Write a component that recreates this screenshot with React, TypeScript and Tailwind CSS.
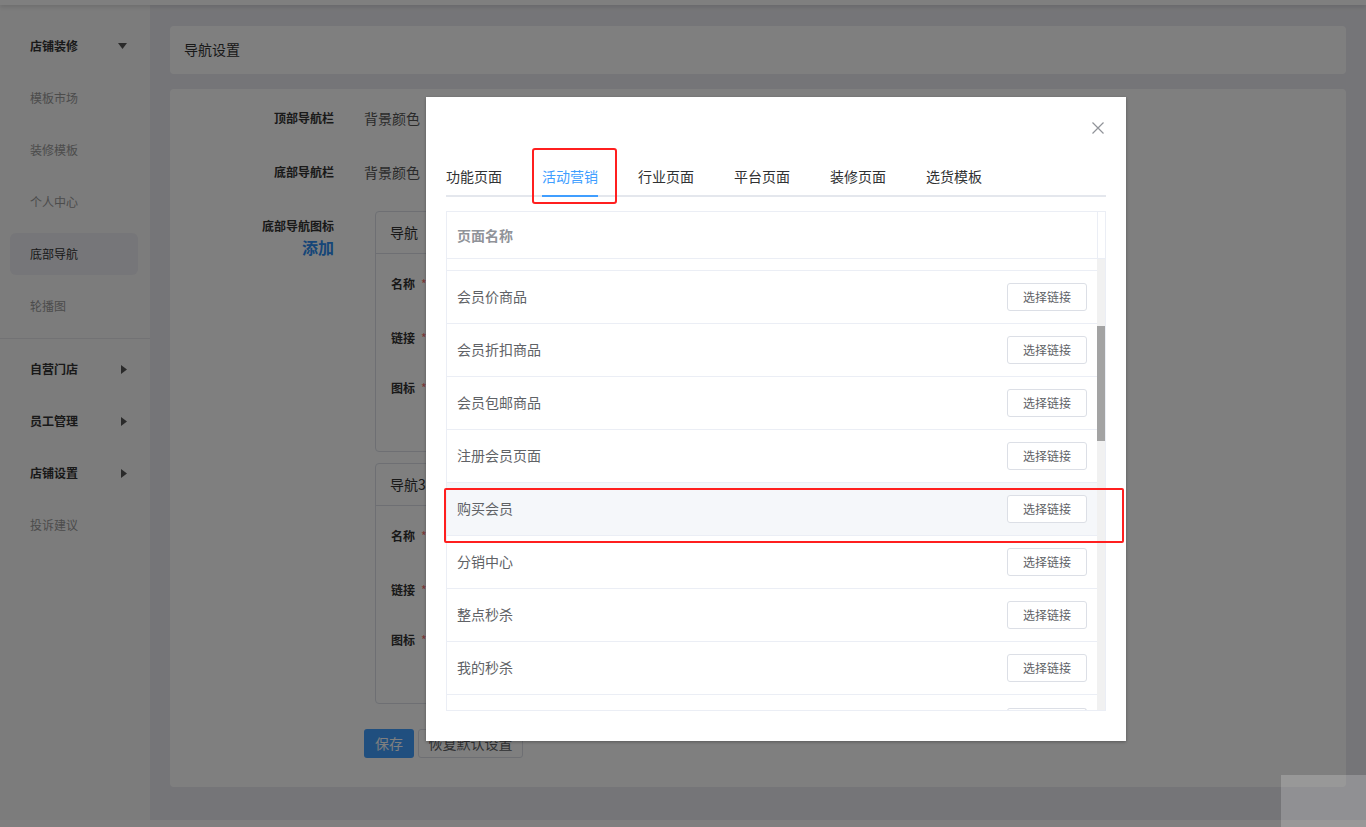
import React from "react";

const menu = [
  { label: "店铺装修", group: true, caret: "down" },
  { label: "模板市场" },
  { label: "装修模板" },
  { label: "个人中心" },
  { label: "底部导航", active: true },
  { label: "轮播图" },
];

const menu2 = [
  { label: "自营门店", group: true },
  { label: "员工管理", group: true },
  { label: "店铺设置", group: true },
  { label: "投诉建议" },
];

const tabs = ["功能页面", "活动营销", "行业页面", "平台页面", "装修页面", "选货模板"];

// rows scrolled into view; first and last are only partly visible
const rows = [
  "会员价商品",
  "会员折扣商品",
  "会员包邮商品",
  "注册会员页面",
  "购买会员",
  "分销中心",
  "整点秒杀",
  "我的秒杀",
];

function Caret({ dir }: { dir: "down" | "right" }) {
  return dir === "down" ? (
    <svg width="9" height="6" viewBox="0 0 9 6">
      <polygon points="0,0 9,0 4.5,6" fill="#555" />
    </svg>
  ) : (
    <svg width="6" height="9" viewBox="0 0 6 9">
      <polygon points="0,0 6,4.5 0,9" fill="#555" />
    </svg>
  );
}

function MenuItem({ item }: { item: { label: string; group?: boolean; active?: boolean; caret?: string } }) {
  return (
    <div className="h-[52px] pl-[10px] pr-[12px] flex items-center">
      <div
        className={
          "h-[42px] w-full rounded-[6px] pl-[20px] pr-[11px] flex items-center justify-between text-[12px] " +
          (item.active ? "bg-[#ececf2] text-[#333]" : item.group ? "text-[#333] font-bold" : "text-[#999]")
        }
      >
        <span>{item.label}</span>
        {item.group && (
          <span className="flex items-center">
            <Caret dir={item.caret === "down" ? "down" : "right"} />
          </span>
        )}
      </div>
    </div>
  );
}

function NavCard({ title }: { title: string }) {
  return (
    <div className="ml-[11px] w-[520px] h-[241px] border border-[#dcdfe6] rounded-[4px] bg-white">
      <div className="h-[42px] border-b border-[#dcdfe6] px-[14px] flex items-center text-[14px] text-[#333]">{title}</div>
      <div className="px-[15px] pt-[14px]">
        <div className="h-[32px] flex items-center text-[12px] font-bold text-[#333]">
          名称<span className="ml-[6px] text-[#f56c6c] font-normal">*</span>
        </div>
        <div className="mt-[22px] h-[32px] flex items-center text-[12px] font-bold text-[#333]">
          链接<span className="ml-[6px] text-[#f56c6c] font-normal">*</span>
        </div>
        <div className="mt-[18px] h-[32px] flex items-center text-[12px] font-bold text-[#333]">
          图标<span className="ml-[6px] text-[#f56c6c] font-normal">*</span>
        </div>
      </div>
    </div>
  );
}

export default function App() {
  return (
    <div className="relative w-[1366px] h-[827px] overflow-hidden bg-white font-['Noto_Sans_CJK_SC','Microsoft_YaHei',sans-serif]">
      {/* page */}
      <div className="h-[5px] bg-white shadow-[0_2px_4px_rgba(0,0,0,0.12)] relative z-[1]" />
      <div className="flex h-[815px]">
        <aside className="w-[150px] shrink-0 bg-[#f8f8f8] pt-[15px]">
          {menu.map((m) => (
            <MenuItem key={m.label} item={m} />
          ))}
          <div className="mt-[6px] h-px bg-[#e4e4e8]" />
          <div className="pt-[4px]">
            {menu2.map((m) => (
              <MenuItem key={m.label} item={m} />
            ))}
          </div>
        </aside>
        <main className="flex-1 bg-[#ebebf0] px-[20px] pt-[21px]">
          <div className="h-[48px] bg-white rounded-[4px] px-[14px] flex items-center text-[14px] text-[#333] leading-[20px] pb-[2px]">导航设置</div>
          <div className="mt-[15px] h-[698px] bg-white rounded-[4px] pt-[13px]">
            <div className="flex h-[32px] items-center">
              <div className="w-[164px] text-right text-[12px] font-bold text-[#333]">顶部导航栏</div>
              <div className="ml-[30px] text-[14px] text-[#555]">背景颜色</div>
            </div>
            <div className="flex h-[32px] items-center mt-[22px]">
              <div className="w-[164px] text-right text-[12px] font-bold text-[#333]">底部导航栏</div>
              <div className="ml-[30px] text-[14px] text-[#555]">背景颜色</div>
            </div>
            <div className="flex mt-[23px]">
              <div className="w-[164px] text-right pt-[5px]">
                <div className="text-[12px] leading-[20px] font-bold text-[#333]">底部导航图标</div>
                <div className="text-[16px] leading-[22px] font-bold text-[#2d8cf0]">添加</div>
              </div>
              <div className="ml-[30px]">
                <NavCard title="导航" />
                <div className="h-[11px]" />
                <NavCard title="导航3" />
                <div className="mt-[25px] flex gap-[4px]">
                  <button className="w-[50px] h-[29px] rounded-[3px] bg-[#409eff] text-white text-[14px]">保存</button>
                  <button className="w-[105px] h-[29px] rounded-[3px] border border-[#dcdfe6] bg-white text-[#606266] text-[14px]">恢复默认设置</button>
                </div>
              </div>
            </div>
          </div>
        </main>
      </div>
      <div className="h-[7px] bg-white" />

      {/* mask */}
      <div className="absolute inset-0 bg-black/50 z-10" />

      {/* dialog */}
      <div className="absolute left-[426px] top-[97px] w-[700px] h-[644px] bg-white z-20 px-[20px] shadow-[0_1px_3px_rgba(0,0,0,0.3)]">
        <div className="relative h-[60px]">
          <svg className="absolute right-[2px] top-[25px]" width="12" height="12" viewBox="0 0 12 12">
            <path d="M0.5 0.5 L11.5 11.5 M11.5 0.5 L0.5 11.5" stroke="#909399" strokeWidth="1.2" fill="none" />
          </svg>
        </div>
        <div className="flex items-start h-[40px] border-b-2 border-[#e4e7ed]">
          {tabs.map((t, i) => (
            <div
              key={t}
              className={"h-[40px] -mb-[2px] flex items-center text-[14px] " + (i === 0 ? "pr-[20px]" : "px-[20px]")}
            >
              <span
                className={
                  "h-[40px] flex items-center border-b-2 " +
                  (i === 1 ? "text-[#409eff] border-[#409eff]" : "text-[#303133] border-transparent")
                }
              >
                {t}
              </span>
            </div>
          ))}
        </div>
        <div className="mt-[14px] h-[500px] border border-[#ebeef5] flex flex-col">
          <div className="h-[47px] border-b border-[#ebeef5] flex">
            <div className="flex-1 px-[10px] flex items-center text-[14px] font-bold text-[#909399]">页面名称</div>
            <div className="w-[8px] border-l border-[#ebeef5]" />
          </div>
          <div className="flex flex-1 overflow-hidden">
            <div className="flex-1 overflow-hidden">
              <div className="h-[12px] border-b border-[#ebeef5]" />
              {rows.map((r) => (
                <div
                  key={r}
                  className={
                    "h-[53px] border-b border-[#ebeef5] flex items-center justify-between px-[10px] " +
                    (r === "购买会员" ? "bg-[#f5f7fa]" : "bg-white")
                  }
                >
                  <span className="text-[14px] text-[#606266] pb-[1px]">{r}</span>
                  <button className="w-[80px] h-[28px] rounded-[3px] border border-[#dcdfe6] bg-white text-[12px] text-[#606266]">选择链接</button>
                </div>
              ))}
              <div className="h-[16px] flex justify-end items-end px-[10px]">
                <div className="w-[80px] h-[3px] rounded-t-[3px] border border-b-0 border-[#dcdfe6]" />
              </div>
            </div>
            <div className="w-[8px] bg-[#f1f1f1] pt-[67px]">
              <div className="h-[115px] bg-[#a3a3a3]" />
            </div>
          </div>
        </div>

        {/* annotations */}
        <div className="absolute left-[106px] top-[51px] w-[85px] h-[56px] border-2 border-[#ff1f1f] rounded-[3px]" />
        <div className="absolute left-[18px] top-[391px] w-[680px] h-[55px] border-2 border-[#ff1f1f] rounded-[2px]" />
      </div>

      {/* floating widget */}
      <div className="absolute right-0 bottom-0 w-[85px] h-[52px] bg-white/20 z-30" />
    </div>
  );
}
